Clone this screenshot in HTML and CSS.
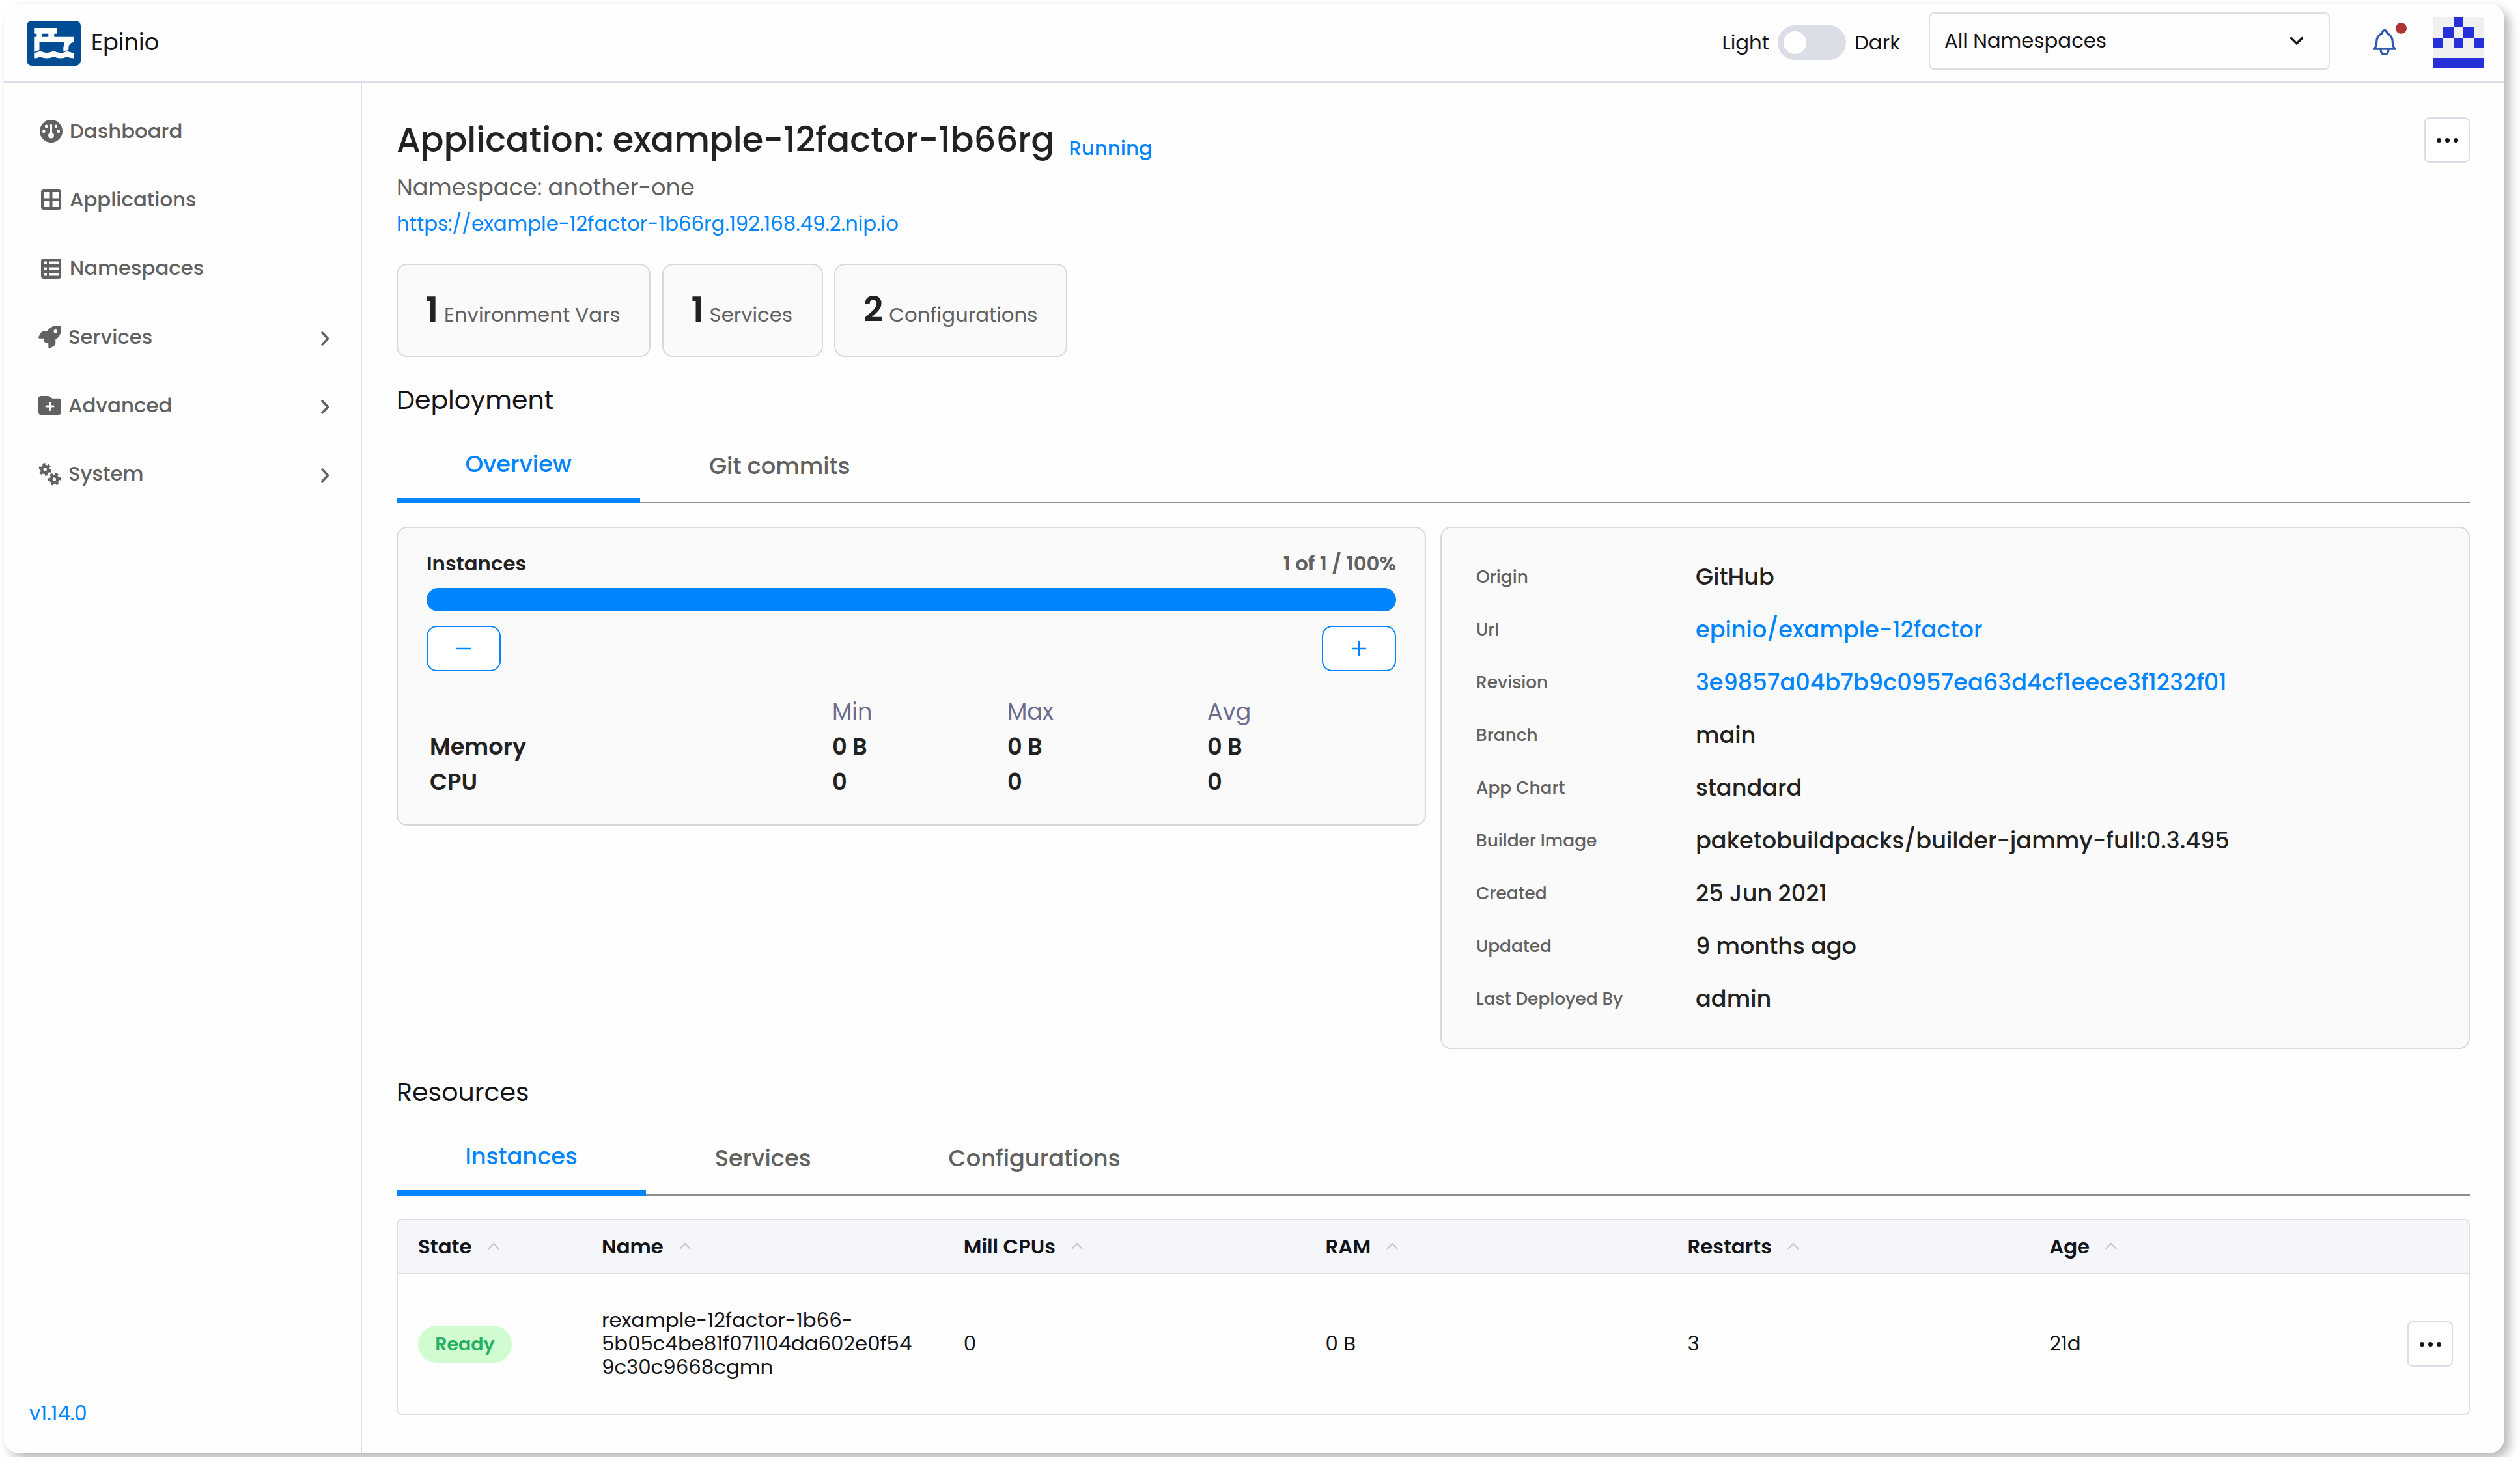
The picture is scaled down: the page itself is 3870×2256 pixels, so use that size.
FILE: index.html
```
<!DOCTYPE html>
<html lang="en">
<head>
    <meta charset="UTF-8">
    <meta name="viewport" content="width=device-width, initial-scale=1.0">
    <title>Epinio</title>
    <link rel="stylesheet" href="styles.css">
</head>
<body>

    <div class="window">
        <header class="header">
            <svg class="logo" viewBox="0 0 83 69">
                <rect width="83" height="69" rx="8" fill="#004d93"/>
                <g fill="#fff">
                    <path d="M11.3 11h35.400v8.700h-4.400v5H72V33c-4.500.5-7.300 3.500-7.500 7.500l-.3 4.500-3 .8-4.700 1.700c-.7-5 0-9.500 1.800-14.500H19.500v12l-3.500 1-4.700 2V24.700h4v-5h-4zM24 19.700v5h9.300v-5z" fill-rule="evenodd"/>
                    <path d="M11.300 49.300q5 0 9.200-3.300 5.500 3.300 10.500 3.300T41.500 46q5 3.300 10.500 3.300T62 46q5 3.300 10 3.300V57.500q-5 0-10-2.500-5 2.500-10 2.500T41.500 55q-5 2.500-10.500 2.500T20.500 55q-4 2.500-9.200 2.500z"/>
                </g>
            </svg>
            <span class="brand">Epinio</span>

            <div class="header-right">
                <span>Light</span>
                <span class="toggle"></span>
                <span>Dark</span>
                <div class="namespace-select">
                    <span>All Namespaces</span>
                    <svg width="24" height="16" viewBox="0 0 24 16"><path d="M3.500 3.500L12 11.800l8.500-8.300" fill="none" stroke="#141419" stroke-width="3.500" stroke-linecap="round"/></svg>
                </div>
                <div class="bell">
                    <svg width="38" height="42" viewBox="0 0 38 42" fill="none" stroke="#3159ab" stroke-width="3.200" stroke-linejoin="round">
                        <path d="M2.800 31.200c3.400-3 3.900-6 3.900-10.700 0-7 3.500-11 8.300-13.500.8-3 2-4.300 4-4.300s3.200 1.300 4 4.300c4.800 2.500 8.300 6.500 8.300 13.500 0 4.700.5 7.700 3.900 10.700zM13 32c0 5 2.500 7.400 6 7.400s6-2.400 6-7.400"/>
                    </svg>
                    <span class="bell-dot"></span>
                </div>
                <svg class="avatar" viewBox="0 0 5 5" shape-rendering="crispEdges">
                    <path d="M0 0h5v5H0z" fill="#f0f0f0"/>
                    <path d="M2 0h1v1H2zM1 1h1v1H1zM3 1h1v1H3zM0 2h1v1H0zM2 2h1v1H2zM4 2h1v1H4zM0 4h5v1H0z" fill="#2630d9"/>
                </svg>
            </div>
        </header>

        <div class="body">
            <nav class="sidebar">
                <a class="nav-item">
                    <svg viewBox="0 0 35 35"><circle cx="17.500" cy="17.500" r="17.500"/><g fill="#fff"><circle cx="6.300" cy="17.800" r="2.400"/><circle cx="10.200" cy="10" r="2.400"/><circle cx="25" cy="10" r="2.400"/><circle cx="28.800" cy="17.800" r="2.400"/><circle cx="17.500" cy="24" r="4.500"/><rect x="16" y="6.500" width="3" height="17" rx="1.500"/></g></svg>
                    <span>Dashboard</span>
                </a>
                <a class="nav-item">
                    <svg viewBox="0 0 35 35"><path fill-rule="evenodd" d="M6 2h23a4 4 0 0 1 4 4v23a4 4 0 0 1-4 4H6a4 4 0 0 1-4-4V6a4 4 0 0 1 4-4zM6 6v9.500h9.500V6zM19.500 6v9.500H29V6zM6 19.500V29h9.500v-9.500zM19.500 19.500V29H29v-9.500z"/></svg>
                    <span>Applications</span>
                </a>
                <a class="nav-item">
                    <svg viewBox="0 0 35 35"><path fill-rule="evenodd" d="M6 2h23a4 4 0 0 1 4 4v23a4 4 0 0 1-4 4H6a4 4 0 0 1-4-4V6a4 4 0 0 1 4-4zM6 6.500V11h5V6.500zM15 6.500V11h14V6.500zM6 15.500V20h5v-4.500zM15 15.500V20h14v-4.500zM6 24v4.500h5V24zM15 24v4.500h14V24z"/></svg>
                    <span>Namespaces</span>
                </a>
                <a class="nav-item group">
                    <svg viewBox="0 0 512 512"><path d="M156.600 384.900L125.700 354c-8.500-8.500-11.500-20.800-7.700-32.200c3-8.900 7-20.500 11.800-33.800L24 288c-8.600 0-16.600-4.600-20.900-12.100s-4.200-16.700 .2-24.100l52.500-88.500c13-21.900 36.500-35.300 61.900-35.300l82.300 0c2.400-4 4.800-7.700 7.200-11.300C289.100-4.100 411.100-8.100 483.900 5.300c11.600 2.100 20.600 11.200 22.800 22.800c13.400 72.900 9.300 194.800-111.400 276.700c-3.500 2.400-7.300 4.800-11.300 7.200v82.300c0 25.400-13.400 49-35.300 61.900l-88.500 52.500c-7.400 4.400-16.600 4.500-24.100 .2s-12.100-12.200-12.100-20.900V380.800c-14.100 4.900-26.400 8.900-35.700 11.900c-11.200 3.600-23.400 .5-31.800-7.800zM384 168a40 40 0 1 0 0-80 40 40 0 1 0 0 80z"/></svg>
                    <span>Services</span>
                    <svg class="chevron" viewBox="0 0 14 24"><path d="M2 3l8.500 9L2 21"/></svg>
                </a>
                <a class="nav-item group">
                    <svg viewBox="0 0 35 35"><path d="M4 3h10.500c1.500 0 2.500.5 3.500 1.500l1.500 1.300c.8.700 1.700 1 2.700 1H31a4 4 0 0 1 4 4V28a4 4 0 0 1-4 4H4a4 4 0 0 1-4-4V7a4 4 0 0 1 4-4z"/><path d="M17.500 13.500v11M12 19h11" stroke="#fff" stroke-width="3" stroke-linecap="round"/></svg>
                    <span>Advanced</span>
                    <svg class="chevron" viewBox="0 0 14 24"><path d="M2 3l8.500 9L2 21"/></svg>
                </a>
                <a class="nav-item group">
                    <svg viewBox="0 0 35 35">
                        <g fill="none" stroke="#616161">
                            <circle cx="10.200" cy="10" r="5" stroke-width="4.600"/>
                            <circle cx="10.200" cy="10" r="8.200" stroke-width="3.200" stroke-dasharray="4.400 4.187"/>
                            <circle cx="24.400" cy="25" r="5" stroke-width="4.600"/>
                            <circle cx="24.400" cy="25" r="8.200" stroke-width="3.200" stroke-dasharray="4.400 4.187" stroke-dashoffset="3"/>
                        </g>
                    </svg>
                    <span>System</span>
                    <svg class="chevron" viewBox="0 0 14 24"><path d="M2 3l8.500 9L2 21"/></svg>
                </a>
                <a class="version">v1.14.0</a>
            </nav>

            <main class="content">
                <div class="title-row">
                    <h1>Application: example-12factor-1b66rg</h1>
                    <span class="status">Running</span>
                    <button class="more"><i></i><i></i><i></i></button>
                </div>
                <div class="namespace">Namespace: another-one</div>
                <a class="app-link">https://example-12factor-1b66rg.192.168.49.2.nip.io</a>

                <div class="counts">
                    <div class="card count env"><b>1</b><span>Environment Vars</span></div>
                    <div class="card count svc"><b>1</b><span>Services</span></div>
                    <div class="card count conf"><b>2</b><span>Configurations</span></div>
                </div>

                <h2>Deployment</h2>
                <div class="tabs">
                    <div class="tab active">Overview</div>
                    <div class="tab">Git commits</div>
                </div>

                <div class="panels">
                    <div class="card instances">
                        <div class="instances-head">
                            <span class="label">Instances</span>
                            <span class="value">1 of 1 / 100%</span>
                        </div>
                        <div class="bar"></div>
                        <div class="scale">
                            <button><svg width="22" height="22"><path d="M0 11h22"/></svg></button>
                            <button><svg width="22" height="22"><path d="M0 11h22M11 0v22"/></svg></button>
                        </div>
                        <div class="stats">
                            <span></span><span class="stat-head">Min</span><span class="stat-head">Max</span><span class="stat-head">Avg</span>
                            <span>Memory</span><span>0 B</span><span>0 B</span><span>0 B</span>
                            <span>CPU</span><span>0</span><span>0</span><span>0</span>
                        </div>
                    </div>

                    <dl class="card details">
                        <dt>Origin</dt><dd>GitHub</dd>
                        <dt>Url</dt><dd class="link">epinio/example-12factor</dd>
                        <dt>Revision</dt><dd class="link">3e9857a04b7b9c0957ea63d4cf1eece3f1232f01</dd>
                        <dt>Branch</dt><dd>main</dd>
                        <dt>App Chart</dt><dd>standard</dd>
                        <dt>Builder Image</dt><dd>paketobuildpacks/builder-jammy-full:0.3.495</dd>
                        <dt>Created</dt><dd>25 Jun 2021</dd>
                        <dt>Updated</dt><dd>9 months ago</dd>
                        <dt>Last Deployed By</dt><dd>admin</dd>
                    </dl>
                </div>

                <h2>Resources</h2>
                <div class="tabs">
                    <div class="tab active">Instances</div>
                    <div class="tab">Services</div>
                    <div class="tab">Configurations</div>
                </div>

                <table>
                    <thead>
                        <tr>
                            <th class="col-state">State<svg class="sort" viewBox="0 0 18 11"><path d="M1 10l8-8 8 8"/></svg></th>
                            <th>Name<svg class="sort" viewBox="0 0 18 11"><path d="M1 10l8-8 8 8"/></svg></th>
                            <th>Mill CPUs<svg class="sort" viewBox="0 0 18 11"><path d="M1 10l8-8 8 8"/></svg></th>
                            <th>RAM<svg class="sort" viewBox="0 0 18 11"><path d="M1 10l8-8 8 8"/></svg></th>
                            <th>Restarts<svg class="sort" viewBox="0 0 18 11"><path d="M1 10l8-8 8 8"/></svg></th>
                            <th>Age<svg class="sort" viewBox="0 0 18 11"><path d="M1 10l8-8 8 8"/></svg></th>
                            <th class="col-actions"></th>
                        </tr>
                    </thead>
                    <tbody>
                        <tr>
                            <td><span class="badge">Ready</span></td>
                            <td class="pod">rexample-12factor-1b66-<br>5b05c4be81f071104da602e0f54<br>9c30c9668cgmn</td>
                            <td>0</td>
                            <td>0 B</td>
                            <td>3</td>
                            <td>21d</td>
                            <td class="actions"><button class="more"><i></i><i></i><i></i></button></td>
                        </tr>
                    </tbody>
                </table>
            </main>
        </div>
    </div>

</body>
</html>
```
FILE: styles.css
```
* {
    box-sizing: border-box;
}
body {
    margin: 0;
    padding: 6px;
    background: #fff;
    color: #141419;
    font-family: Poppins, Inter, "Open Sans", sans-serif;
    font-size: 30.8px;
}
.window {
    width: 3840px;
    height: 2226px;
    border-radius: 24px;
    background: #fefefe;
    box-shadow: 8px 8px 16px rgba(0, 0, 0, 0.28);
    display: flex;
    flex-direction: column;
    overflow: hidden;
}

/* header */
.header {
    height: 121px;
    border-bottom: 2px solid #dcdee7;
    padding: 0 31px 0 35px;
    display: flex;
    align-items: center;
    flex: none;
}
.logo {
    width: 83px;
    height: 69px;
    margin-top: 2px;
}
.brand {
    margin: -2px 0 0 16px;
    font-size: 35.2px;
}
.header-right {
    margin-left: auto;
    display: flex;
    align-items: center;
}
.toggle {
    width: 105px;
    height: 53px;
    margin: 0 13px;
    border-radius: 27px;
    background: #dcdee7;
    padding: 9px;
}
.toggle::before {
    content: "";
    display: block;
    width: 35px;
    height: 35px;
    border-radius: 50%;
    background: #fff;
}
.namespace-select {
    width: 616px;
    height: 88px;
    margin: 0 65px 5px 44px;
    padding: 0 37px 0 22px;
    border: 2px solid #dcdee7;
    border-radius: 8px;
    display: flex;
    align-items: center;
    justify-content: space-between;
}
.bell {
    position: relative;
    height: 42px;
    margin: -2px 55px 0 0;
}
.bell svg {
    display: block;
}
.bell-dot {
    position: absolute;
    top: -9px;
    right: -15px;
    width: 17px;
    height: 17px;
    border-radius: 50%;
    background: #b03434;
}
.avatar {
    width: 79px;
    height: 79px;
}

/* sidebar */
.body {
    flex: 1;
    display: flex;
    min-height: 0;
}
.sidebar {
    width: 550px;
    border-right: 2px solid #dcdee7;
    padding-top: 22px;
    display: flex;
    flex-direction: column;
    flex: none;
}
.nav-item {
    height: 105.3px;
    padding: 0 47px 0 55px;
    display: flex;
    align-items: center;
    gap: 11px;
    color: #616161;
    font-weight: 500;
}
.nav-item svg {
    width: 35px;
    height: 35px;
    fill: #616161;
}
.nav-item.group {
    padding-left: 53px;
}
.nav-item .chevron {
    width: 14px;
    height: 24px;
    margin: 4px 0 0 auto;
    fill: none;
    stroke: #616161;
    stroke-width: 3.5;
    stroke-linecap: round;
}
.version {
    margin: auto 0 41px 39px;
    line-height: 40px;
    color: #0085ff;
}

/* content */
.content {
    flex: 1;
    padding: 53px;
}
.title-row {
    height: 70px;
    display: flex;
    align-items: center;
}
h1 {
    margin: 0;
    font-size: 52.75px;
    font-weight: 500;
    color: #222;
}
.status {
    margin: 25px auto 0 22px;
    color: #0085ff;
    font-weight: 500;
}
.more {
    width: 70px;
    height: 70px;
    padding: 0;
    border: 2px solid #dcdee7;
    border-radius: 8px;
    background: #fff;
    display: flex;
    align-items: center;
    justify-content: center;
    gap: 6px;
}
.more i {
    width: 7px;
    height: 7px;
    border-radius: 50%;
    background: #141419;
}
.namespace {
    margin-top: 11px;
    line-height: 54px;
    font-size: 35.2px;
    color: #616161;
}
.app-link {
    display: block;
    margin-top: 2px;
    line-height: 54px;
    color: #0085ff;
}
.card {
    border: 2px solid #d8d8d8;
    border-radius: 16px;
    background: #fafafa;
}
.counts {
    margin-top: 34px;
    display: flex;
    gap: 17.5px;
}
.count {
    height: 143px;
    padding: 30px 0 0 43px;
    color: #616161;
    white-space: nowrap;
}
.count b {
    margin-right: 9px;
    font-size: 52.75px;
    font-weight: 600;
    color: #222;
}
.count.env {
    width: 390px;
}
.count.svc {
    width: 247px;
}
.count.conf {
    width: 358px;
}
h2 {
    margin: 37px 0 0;
    line-height: 60px;
    font-size: 39.5px;
    font-weight: 400;
}

.tabs {
    margin-top: 16px;
    height: 112px;
    border-bottom: 2px solid #8f8f93;
    display: flex;
}
.tab {
    height: 112px;
    padding: 0 105.5px 1px;
    border-bottom: 2px solid #8f8f93;
    display: flex;
    align-items: center;
    font-size: 35.2px;
    font-weight: 500;
    color: #616161;
}
.tab.active {
    border-bottom: 8px solid #0085ff;
    color: #0085ff;
}

.panels {
    margin-top: 36px;
    display: grid;
    grid-template-columns: 1fr 1fr;
    gap: 22px;
    align-items: start;
}
.instances {
    height: 459px;
    padding: 34px 44px 0;
}
.instances-head {
    display: flex;
    justify-content: space-between;
    line-height: 42px;
    font-weight: 600;
}
.instances-head .label {
    color: #222;
}
.instances-head .value {
    color: #616161;
}
.bar {
    height: 36px;
    margin-top: 16px;
    border-radius: 18px;
    background: #0085ff;
}
.scale {
    margin-top: 22px;
    display: flex;
    justify-content: space-between;
}
.scale button {
    width: 114px;
    height: 70px;
    padding: 0;
    border: 2px solid #0085ff;
    border-radius: 16px;
    background: #fff;
    display: flex;
    align-items: center;
    justify-content: center;
}
.scale svg {
    stroke: #0085ff;
    stroke-width: 2.5;
}
.stats {
    margin: 35px 0 0 5px;
    display: grid;
    grid-template-columns: 618px 269px 307px 1fr;
    grid-auto-rows: 54px;
    line-height: 54px;
    font-size: 35.2px;
    font-weight: 600;
    color: #222;
}
.stat-head {
    font-weight: 400;
    color: #6c6c8f;
}
.details {
    height: 802px;
    margin: 0;
    padding: 34px 53px 0;
    display: grid;
    grid-template-columns: 337px 1fr;
    grid-auto-rows: 81px;
    line-height: 81px;
}
dt {
    font-size: 26.4px;
    font-weight: 500;
    color: #616161;
}
dd {
    margin: 0;
    font-size: 35.15px;
    font-weight: 500;
    color: #222;
}
dd.link {
    color: #0085ff;
}

/* instances table */
table {
    width: 100%;
    height: 301px;
    margin-top: 36px;
    table-layout: fixed;
    border: 2px solid #dcdee7;
    border-radius: 8px;
    border-spacing: 0;
    overflow: hidden;
}
th, td {
    padding: 0 0 0 31px;
    text-align: left;
}
th {
    height: 83px;
    background: #f5f6fa;
    border-bottom: 2px solid #dcdee7;
    font-weight: 600;
}
.col-state {
    width: 282px;
}
.col-actions {
    width: 119px;
}
.sort {
    width: 18px;
    height: 11px;
    margin: 0 0 6px 24px;
    fill: none;
    stroke: #c4c5d0;
    stroke-width: 2;
}
.badge {
    display: inline-block;
    width: 144px;
    border-radius: 29px;
    background: #d1fcd1;
    color: #27b063;
    line-height: 57px;
    text-align: center;
    font-size: 28.5px;
    font-weight: 600;
}
.pod {
    line-height: 36px;
}
td.actions {
    padding-left: 25px;
}
```
